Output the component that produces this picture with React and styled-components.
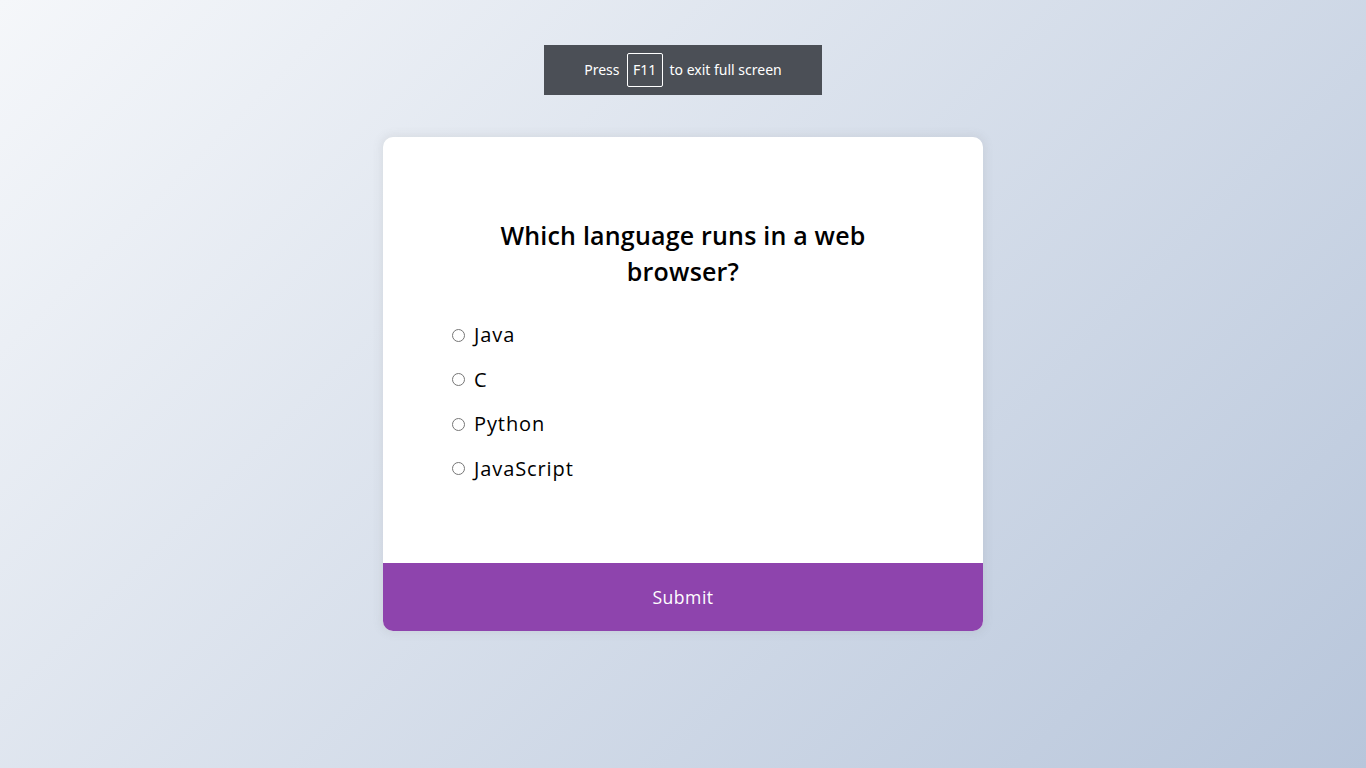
import React, { useState } from "react";
import styled, { createGlobalStyle } from "styled-components";

const GlobalStyle = createGlobalStyle`
  * {
    box-sizing: border-box;
  }
  body {
    margin: 0;
    font-family: "Open Sans", "Liberation Sans", sans-serif;
    background-color: #b8c6db;
    background-image: linear-gradient(315deg, #b8c6db 0%, #f5f7fa 100%);
    min-height: 100vh;
  }
`;

const Page = styled.div`
  height: 100vh;
  display: flex;
  align-items: center;
  justify-content: center;
  overflow: hidden;
`;

const Toast = styled.div`
  position: absolute;
  top: 45px;
  left: 544px;
  width: 278px;
  height: 50px;
  padding-bottom: 1px;
  background: #4b4f56;
  color: #ffffff;
  display: flex;
  align-items: center;
  justify-content: center;
  gap: 7px;
  font-family: "Noto Sans", "Open Sans", sans-serif;
  font-size: 14px;
`;

const Key = styled.span`
  display: inline-flex;
  align-items: center;
  justify-content: center;
  width: 36px;
  height: 34px;
  border: 1px solid #ffffff;
  border-radius: 2px;
`;

const Card = styled.div`
  width: 600px;
  background: #ffffff;
  border-radius: 10px;
  box-shadow: 0 0 10px 2px rgba(100, 100, 100, 0.1);
  overflow: hidden;
`;

const Header = styled.div`
  padding: 64px;
`;

const Question = styled.h2`
  margin: 0;
  padding: 16px;
  text-align: center;
  font-size: 25px;
  line-height: 36px;
  font-weight: 600;
  letter-spacing: 0.2px;
  color: #000;
`;

const Options = styled.ul`
  list-style: none;
  padding: 0;
  margin: 16px 0;
`;

const Option = styled.li`
  display: flex;
  align-items: center;
  margin: 16px 0;
  height: 28.5px;
  font-size: 20px;
  line-height: 28.5px;
  letter-spacing: 0.9px;
  color: #000;
`;

const Radio = styled.input`
  margin: 0 0 0 5px;
  width: 13px;
  height: 13px;
`;

const Label = styled.label`
  margin-left: 9px;
  cursor: pointer;
`;

const SubmitButton = styled.button`
  display: block;
  width: 100%;
  border: none;
  background: #8e44ad;
  color: #ffffff;
  font-family: inherit;
  font-size: 17.6px;
  line-height: 26px;
  letter-spacing: 0.5px;
  padding: 20.8px;
  cursor: pointer;
  &:hover {
    background: #732d91;
  }
`;

const answers = ["Java", "C", "Python", "JavaScript"];

const App = () => {
  const [picked, setPicked] = useState(null);

  return (
    <>
      <GlobalStyle />
      <Page>
        <Toast>
          Press <Key>F11</Key> to exit full screen
        </Toast>
        <Card>
          <Header>
            <Question>Which language runs in a web browser?</Question>
            <Options>
              {answers.map((a, i) => (
                <Option key={a}>
                  <Radio
                    type="radio"
                    name="answer"
                    id={"a" + i}
                    checked={picked === i}
                    onChange={() => setPicked(i)}
                  />
                  <Label htmlFor={"a" + i}>{a}</Label>
                </Option>
              ))}
            </Options>
          </Header>
          <SubmitButton>Submit</SubmitButton>
        </Card>
      </Page>
    </>
  );
};

export default App;
